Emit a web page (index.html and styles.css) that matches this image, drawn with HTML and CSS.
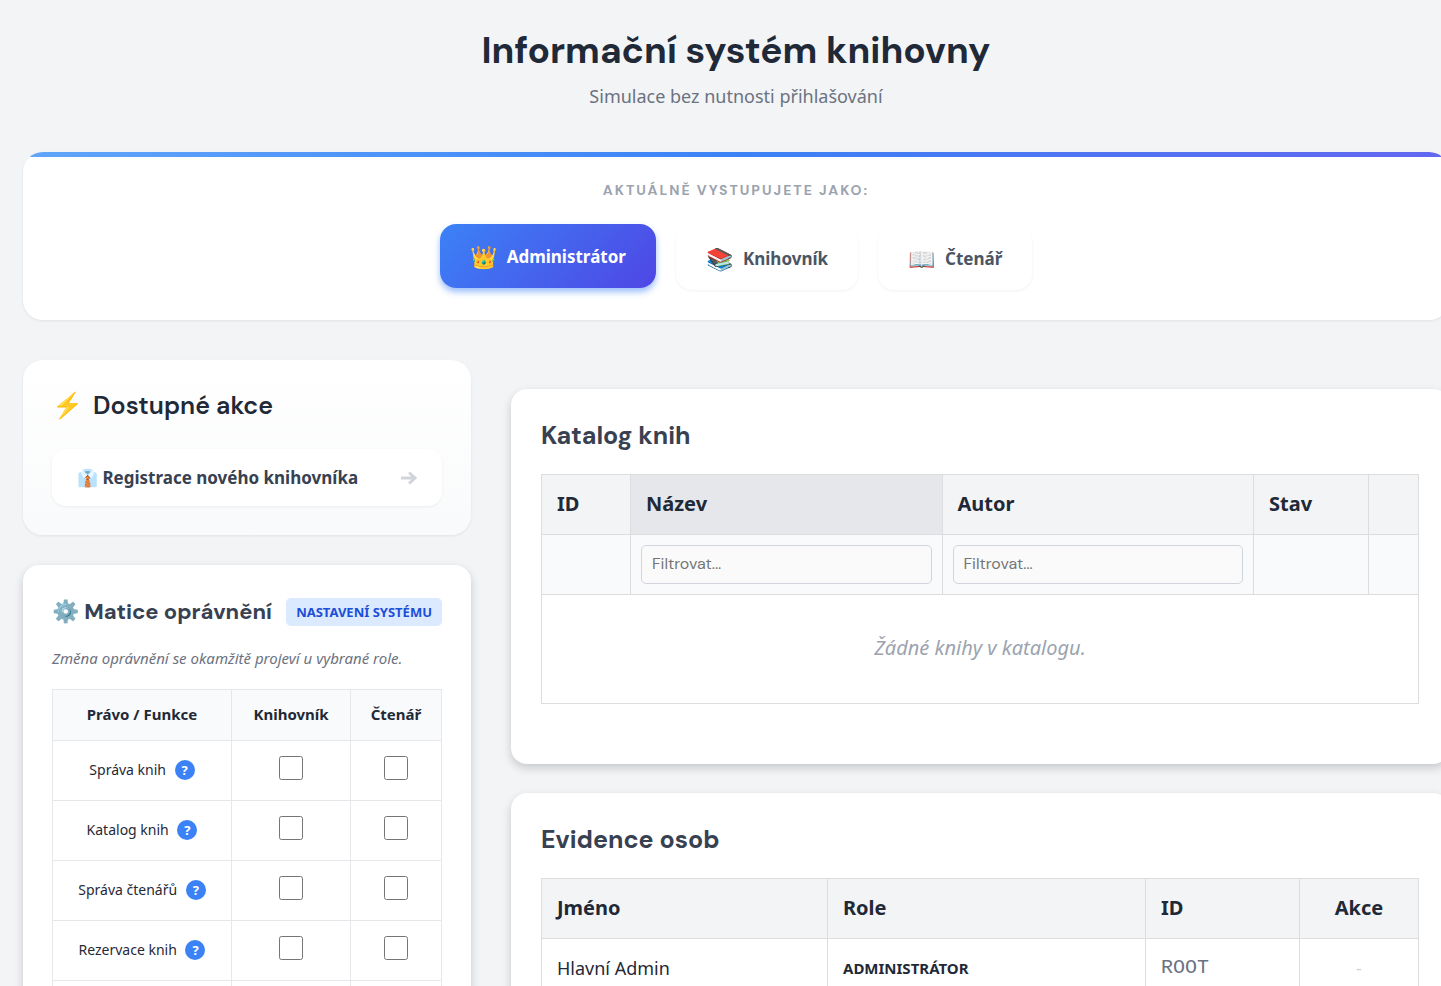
FILE: index.html
```html
<!doctype html>
<html lang="cs">
  <head>
    <meta charset="UTF-8" />
    <meta name="viewport" content="width=device-width, initial-scale=1.0" />
    <title>Informační systém knihovny</title>
    <link rel="stylesheet" href="styles.css">
  </head>
  <body>
    <div class="container">
      <header class="page-header">
        <h1>Informační systém knihovny</h1>
        <p>Simulace bez nutnosti přihlašování</p>
      </header>

      <section class="role-switcher">
        <div class="role-label">Aktuálně vystupujete jako:</div>
        <div class="role-buttons">
          <button type="button" class="role-btn active"><span class="role-icon">👑</span>Administrátor</button>
          <button type="button" class="role-btn"><span class="role-icon">📚</span>Knihovník</button>
          <button type="button" class="role-btn"><span class="role-icon">📖</span>Čtenář</button>
        </div>
      </section>

      <main class="layout">
        <aside class="sidebar">
          <section class="actions">
            <h2><span class="bolt">⚡</span>Dostupné akce</h2>
            <button type="button" class="action-btn">
              <span>👔 Registrace nového knihovníka</span>
              <svg class="arrow" viewBox="0 0 16 14" aria-hidden="true">
                <path d="M0 7h14M8 1.5l6 5.5-6 5.5" />
              </svg>
            </button>
          </section>

          <section class="card matrix">
            <div class="matrix-head">
              <h3>⚙️ Matice oprávnění</h3>
              <span class="tag">Nastavení systému</span>
            </div>
            <p class="hint">Změna oprávnění se okamžitě projeví u vybrané role.</p>
            <table class="matrix-table">
              <colgroup>
                <col class="w-46">
                <col class="w-31">
                <col>
              </colgroup>
              <thead>
                <tr><th>Právo / Funkce</th><th>Knihovník</th><th>Čtenář</th></tr>
              </thead>
              <tbody>
                <tr>
                  <td>Správa knih <span class="help">?</span></td>
                  <td><input type="checkbox" aria-label="Správa knih – Knihovník"></td>
                  <td><input type="checkbox" aria-label="Správa knih – Čtenář"></td>
                </tr>
                <tr>
                  <td>Katalog knih <span class="help">?</span></td>
                  <td><input type="checkbox" aria-label="Katalog knih – Knihovník"></td>
                  <td><input type="checkbox" aria-label="Katalog knih – Čtenář"></td>
                </tr>
                <tr>
                  <td>Správa čtenářů <span class="help">?</span></td>
                  <td><input type="checkbox" aria-label="Správa čtenářů – Knihovník"></td>
                  <td><input type="checkbox" aria-label="Správa čtenářů – Čtenář"></td>
                </tr>
                <tr>
                  <td>Rezervace knih <span class="help">?</span></td>
                  <td><input type="checkbox" aria-label="Rezervace knih – Knihovník"></td>
                  <td><input type="checkbox" aria-label="Rezervace knih – Čtenář"></td>
                </tr>
                <tr>
                  <td></td>
                  <td></td>
                  <td></td>
                </tr>
              </tbody>
            </table>
          </section>
        </aside>

        <div class="content">
          <section class="card">
            <h2>Katalog knih</h2>
            <table class="data-table">
              <colgroup>
                <col class="w-10">
                <col>
                <col>
                <col class="w-13">
                <col class="w-6">
              </colgroup>
              <thead>
                <tr><th>ID</th><th class="sorted">Název</th><th>Autor</th><th>Stav</th><th></th></tr>
                <tr class="filters">
                  <td></td>
                  <td><input type="text" placeholder="Filtrovat..." aria-label="Filtrovat název"></td>
                  <td><input type="text" placeholder="Filtrovat..." aria-label="Filtrovat autora"></td>
                  <td></td>
                  <td></td>
                </tr>
              </thead>
              <tbody>
                <tr><td colspan="5" class="empty">Žádné knihy v katalogu.</td></tr>
              </tbody>
            </table>
          </section>

          <section class="card">
            <h2>Evidence osob</h2>
            <table class="data-table">
              <colgroup>
                <col>
                <col class="w-36">
                <col class="w-18">
                <col class="w-14">
              </colgroup>
              <thead>
                <tr><th>Jméno</th><th>Role</th><th>ID</th><th class="center">Akce</th></tr>
              </thead>
              <tbody>
                <tr>
                  <td>Hlavní Admin</td>
                  <td class="role-name">Administrátor</td>
                  <td class="code">ROOT</td>
                  <td class="center muted">-</td>
                </tr>
              </tbody>
            </table>
          </section>
        </div>
      </main>
    </div>
  </body>
</html>
```
FILE: styles.css
```css
* {
  box-sizing: border-box;
}

body {
  margin: 0;
  background-color: #f3f4f6;
  color: #1f2937;
  font-family: "Noto Sans", Tahoma, sans-serif;
  font-size: 18px;
  line-height: 28px;
  overflow-x: hidden;
}

h1,
h2,
h3,
p {
  margin: 0;
}

h1,
h2,
h3,
.role-label {
  font-family: "DM Sans", Inter, sans-serif;
}

/* the right edge runs slightly past the window */
.container {
  margin: 0 -8px 0 23px;
}

.page-header {
  padding: 25px 0 42px;
  text-align: center;
}

.page-header h1 {
  font-size: 37px;
  font-weight: 700;
  line-height: 50px;
}

.page-header p {
  margin-top: 7px;
  color: #6b7280;
}

.role-switcher {
  position: relative;
  overflow: hidden;
  padding: 28px 30px 30px;
  background-color: #fff;
  border-radius: 20px;
  box-shadow: 0 1px 3px rgba(0, 0, 0, 0.08);
  text-align: center;
}

.role-switcher::before {
  content: "";
  position: absolute;
  top: 0;
  left: 0;
  right: 0;
  height: 5px;
  background: linear-gradient(90deg, #60a5fa, #3b82f6, #6366f1);
}

.role-label {
  color: #9ca3af;
  font-size: 14px;
  font-weight: 700;
  letter-spacing: 2px;
  line-height: 20px;
  text-transform: uppercase;
}

.role-buttons {
  display: flex;
  justify-content: center;
  gap: 20px;
  margin-top: 26px;
}

.role-btn {
  display: flex;
  align-items: center;
  gap: 10px;
  height: 64px;
  padding: 0 30px;
  border: none;
  border-radius: 16px;
  background-color: #fff;
  box-shadow: 0 1px 3px rgba(0, 0, 0, 0.06);
  color: #4b5563;
  font-family: inherit;
  font-size: 17px;
  font-weight: 700;
  cursor: pointer;
}

.role-icon {
  font-size: 22px;
}

.role-btn.active {
  background: linear-gradient(135deg, #3b82f6, #4f46e5);
  box-shadow: 0 4px 6px rgba(59, 130, 246, 0.5);
  color: #fff;
  transform: translateY(-2px);
}

.layout {
  display: grid;
  grid-template-columns: 448px minmax(0, 1fr);
  gap: 40px;
  margin-top: 40px;
}

.actions {
  padding: 29px;
  border-radius: 20px;
  background: linear-gradient(#fff, #f9fafb);
  box-shadow: 0 1px 3px rgba(0, 0, 0, 0.08);
}

.actions h2 {
  display: flex;
  gap: 10px;
  font-size: 25px;
  font-weight: 600;
  line-height: 34px;
}

.action-btn {
  display: flex;
  justify-content: space-between;
  align-items: center;
  width: 100%;
  height: 57px;
  margin-top: 26px;
  padding: 0 25px;
  border: none;
  border-radius: 14px;
  background-color: #fff;
  box-shadow: 0 1px 3px rgba(0, 0, 0, 0.06);
  color: #374151;
  font-family: inherit;
  font-size: 17px;
  font-weight: 700;
  cursor: pointer;
}

.arrow {
  width: 16px;
  height: 14px;
  fill: none;
  stroke: #d1d5db;
  stroke-width: 3;
}

.card {
  padding: 30px;
  border-radius: 16px;
  background-color: #fff;
  box-shadow: 0 4px 10px rgba(0, 0, 0, 0.18);
}

.card h2,
.card h3 {
  color: #374151;
  font-size: 25px;
  font-weight: 700;
  line-height: 34px;
}

.matrix {
  margin-top: 30px;
  padding: 30px 29px;
}

.matrix-head {
  display: flex;
  justify-content: space-between;
  align-items: center;
  white-space: nowrap;
}

.card h3 {
  font-size: 22px;
}

.tag {
  padding: 4px 10px;
  border-radius: 5px;
  background-color: #dbeafe;
  color: #1d4ed8;
  font-size: 13px;
  font-weight: 700;
  line-height: 20px;
  text-transform: uppercase;
}

.hint {
  margin: 19px 0 21px;
  color: #6b7280;
  font-size: 15px;
  font-style: italic;
  line-height: 20px;
}

table {
  width: 100%;
  border-collapse: collapse;
  table-layout: fixed;
}

.matrix-table th,
.matrix-table td {
  height: 60px;
  padding: 0;
  border: 1px solid #e5e7eb;
  font-size: 14px;
  text-align: center;
}

.matrix-table th {
  height: 51px;
  padding-bottom: 2px;
  background-color: #f9fafb;
  font-size: 15px;
}

.matrix-table td {
  padding-bottom: 2px;
}

.matrix-table input {
  width: 24px;
  height: 24px;
  margin: 0 0 4px;
  vertical-align: middle;
}

.help {
  display: inline-block;
  width: 20px;
  height: 20px;
  margin-left: 5px;
  border-radius: 50%;
  background-color: #3b82f6;
  color: #fff;
  font-size: 13px;
  font-weight: 700;
  line-height: 20px;
}

.content {
  display: flex;
  flex-direction: column;
  gap: 29px;
  padding-top: 29px;
}

.content h2 {
  margin-bottom: 21px;
}

.content .card:first-child {
  padding-bottom: 60px;
}

.data-table th,
.data-table td {
  height: 60px;
  padding: 0 15px 2px;
  border: 1px solid #ddd;
  text-align: left;
}

.data-table th {
  background-color: #f3f4f6;
  font-size: 20px;
}

.data-table .sorted {
  background-color: #e5e7eb;
}

.data-table .filters td {
  padding: 0 10px;
  background-color: #f9fafb;
}

.filters input {
  display: block;
  width: 100%;
  height: 39px;
  padding: 0 10px 2px;
  border: 1px solid #d1d5db;
  border-radius: 5px;
  background-color: #fafafa;
  font-family: "DM Sans", Inter, sans-serif;
  font-size: 16px;
}

.data-table .empty {
  height: 109px;
  color: #9ca3af;
  font-size: 20px;
  font-style: italic;
  text-align: center;
}

.data-table .center {
  text-align: center;
}

.data-table .muted {
  color: #d1d5db;
}

.role-name {
  font-size: 15px;
  font-weight: 700;
  text-transform: uppercase;
}

.code {
  color: #6b7280;
  font-family: "Liberation Mono", monospace;
  font-size: 20px;
}

.w-6 {
  width: 50px;
}

.w-10 {
  width: 89px;
}

.w-13 {
  width: 115px;
}

.w-14 {
  width: 119px;
}

.w-18 {
  width: 154px;
}

.w-31 {
  width: 119px;
}

.w-36 {
  width: 318px;
}

.w-46 {
  width: 179px;
}
```
